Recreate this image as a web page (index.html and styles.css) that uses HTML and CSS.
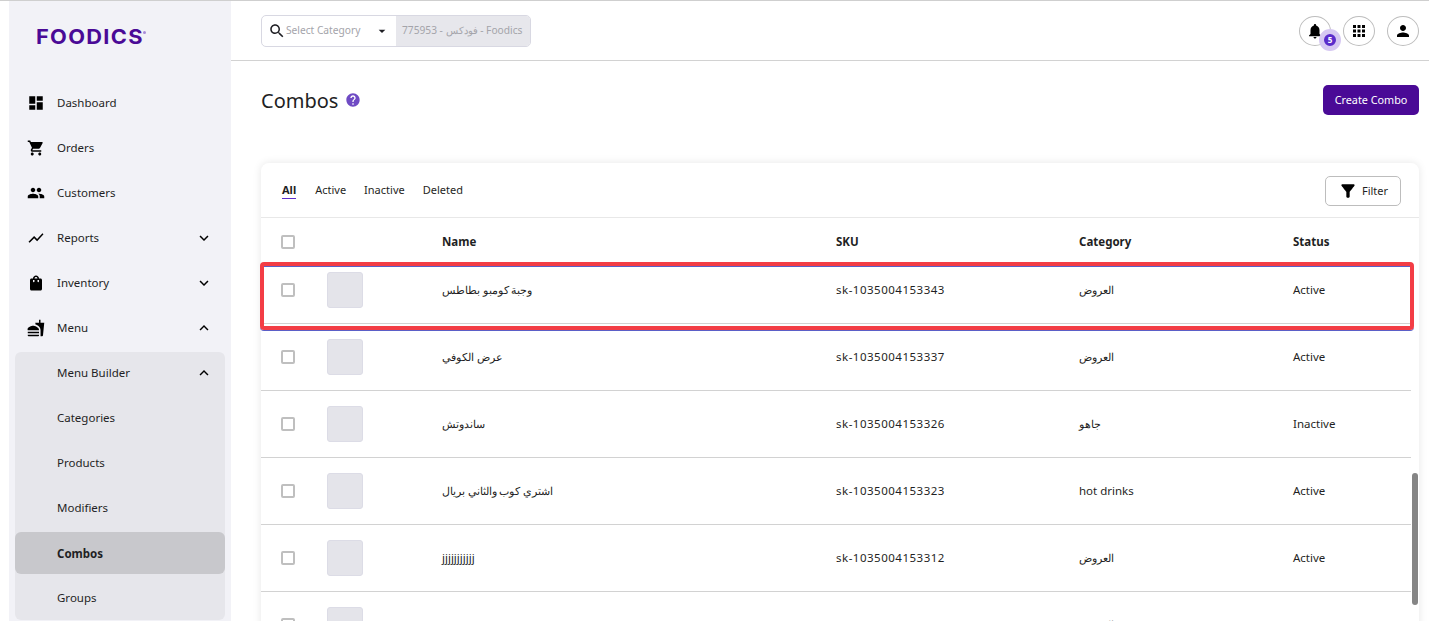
FILE: index.html
```html
<!DOCTYPE html>
<html lang="en">
<head>
    <meta charset="UTF-8">
    <meta name="viewport" content="width=device-width, initial-scale=1.0">
    <title>Combos</title>
    <link rel="stylesheet" href="styles.css">
</head>
<body>
    <aside class="sidebar">
        <div class="logo"><span class="logo-text">FOODICS</span><span class="logo-mark"></span></div>
        <nav class="nav">
            <a href="#" class="nav-item">
                <svg class="nav-icon" viewBox="0 0 24 24"><path d="M3 13h8V3H3v10zm0 8h8v-6H3v6zm10 0h8V11h-8v10zm0-18v6h8V3h-8z"/></svg>
                Dashboard
            </a>
            <a href="#" class="nav-item">
                <svg class="nav-icon" viewBox="0 0 24 24"><path d="M7 18c-1.1 0-1.99.9-1.99 2S5.9 22 7 22s2-.9 2-2-.9-2-2-2zM1 2v2h2l3.6 7.59-1.35 2.45c-.16.28-.25.61-.25.96 0 1.1.9 2 2 2h12v-2H7.42c-.14 0-.25-.11-.25-.25l.03-.12.9-1.63h7.45c.75 0 1.41-.41 1.75-1.03l3.58-6.49c.08-.14.12-.31.12-.48 0-.55-.45-1-1-1H5.21l-.94-2H1zm16 16c-1.1 0-1.99.9-1.99 2s.89 2 1.99 2 2-.9 2-2-.9-2-2-2z"/></svg>
                Orders
            </a>
            <a href="#" class="nav-item">
                <svg class="nav-icon" viewBox="0 0 24 24"><path d="M16 11c1.66 0 2.99-1.34 2.99-3S17.66 5 16 5c-1.66 0-3 1.34-3 3s1.34 3 3 3zm-8 0c1.66 0 2.99-1.34 2.99-3S9.66 5 8 5C6.34 5 5 6.34 5 8s1.34 3 3 3zm0 2c-2.33 0-7 1.17-7 3.5V19h14v-2.5c0-2.33-4.67-3.5-7-3.5zm8 0c-.29 0-.62.02-.97.05 1.16.84 1.97 1.97 1.97 3.45V19h6v-2.5c0-2.33-4.67-3.5-7-3.5z"/></svg>
                Customers
            </a>
            <a href="#" class="nav-item">
                <svg class="nav-icon" viewBox="0 0 24 24"><path d="M3.5 18.49l6-6.01 4 4L22 6.92l-1.41-1.41-7.09 7.97-4-4L2 16.99z"/></svg>
                Reports
                <svg class="chevron" viewBox="0 0 24 24"><path d="M16.59 8.59L12 13.17 7.41 8.59 6 10l6 6 6-6z"/></svg>
            </a>
            <a href="#" class="nav-item">
                <svg class="nav-icon" viewBox="0 0 24 24"><path d="M18 6h-2c0-2.21-1.79-4-4-4S8 3.79 8 6H6c-1.1 0-2 .9-2 2v12c0 1.1.9 2 2 2h12c1.1 0 2-.9 2-2V8c0-1.1-.9-2-2-2zm-8 4c0 .55-.45 1-1 1s-1-.45-1-1V8h2v2zm2-6c1.1 0 2 .9 2 2h-4c0-1.1.9-2 2-2zm4 6c0 .55-.45 1-1 1s-1-.45-1-1V8h2v2z"/></svg>
                Inventory
                <svg class="chevron" viewBox="0 0 24 24"><path d="M16.59 8.59L12 13.17 7.41 8.59 6 10l6 6 6-6z"/></svg>
            </a>
            <a href="#" class="nav-item">
                <svg class="nav-icon" viewBox="0 0 24 24"><path d="M18.06 22.99h1.66c.84 0 1.53-.64 1.63-1.46L23 5.05h-5V1h-1.97v4.05h-4.97l.3 2.34c1.71.47 3.31 1.32 4.27 2.26 1.44 1.42 2.43 2.89 2.43 5.29v8.05zM1 21.99V21h15.03v.99c0 .55-.45 1-1.01 1H2.01c-.56 0-1.01-.45-1.01-1zm15.03-7c.5-4-6.03-5.99-8.03-5.99-2 0-8.53 1.99-7.03 5.99h15.06zM1.02 17h15v2h-15z"/></svg>
                Menu
                <svg class="chevron" viewBox="0 0 24 24"><path d="M12 8l-6 6 1.41 1.41L12 10.83l4.59 4.58L18 14z"/></svg>
            </a>
            <div class="subnav">
                <a href="#" class="nav-item sub-item sub-item-first">
                    Menu Builder
                    <svg class="chevron" viewBox="0 0 24 24"><path d="M12 8l-6 6 1.41 1.41L12 10.83l4.59 4.58L18 14z"/></svg>
                </a>
                <a href="#" class="nav-item sub-item">Categories</a>
                <a href="#" class="nav-item sub-item">Products</a>
                <a href="#" class="nav-item sub-item">Modifiers</a>
                <a href="#" class="nav-item sub-item sub-item-active">Combos</a>
                <a href="#" class="nav-item sub-item">Groups</a>
            </div>
        </nav>
    </aside>

    <div class="main">
        <header class="topbar">
            <div class="search">
                <div class="search-select">
                    <svg class="search-icon" viewBox="0 0 24 24"><path d="M15.5 14h-.79l-.28-.27C15.41 12.59 16 11.11 16 9.5 16 5.91 13.09 3 9.5 3S3 5.91 3 9.5 5.91 16 9.5 16c1.61 0 3.09-.59 4.23-1.57l.27.28v.79l5 4.99L20.49 19l-4.99-5zm-6 0C7.01 14 5 11.99 5 9.5S7.01 5 9.5 5 14 7.01 14 9.5 11.99 14 9.5 14z"/></svg>
                    <span class="search-label">Select Category</span>
                    <svg class="search-caret" viewBox="0 0 24 24"><path d="M7 10l5 5 5-5z"/></svg>
                </div>
                <div class="search-value">775953 - فودكس - Foodics</div>
            </div>
            <div class="topbar-actions">
                <button class="round-btn">
                    <svg viewBox="0 0 24 24"><path d="M12 22c1.1 0 2-.9 2-2h-4c0 1.1.89 2 2 2zm6-6v-5c0-3.07-1.64-5.64-4.5-6.32V4c0-.83-.67-1.5-1.5-1.5s-1.5.67-1.5 1.5v.68C7.63 5.36 6 7.92 6 11v5l-2 2v1h16v-1l-2-2z"/></svg>
                    <span class="badge">5</span>
                </button>
                <button class="round-btn">
                    <svg viewBox="0 0 24 24"><path d="M4 8h4V4H4v4zm6 12h4v-4h-4v4zm-6 0h4v-4H4v4zm0-6h4v-4H4v4zm6 0h4v-4h-4v4zm6-10v4h4V4h-4zm-6 4h4V4h-4v4zm6 6h4v-4h-4v4zm0 6h4v-4h-4v4z"/></svg>
                </button>
                <button class="round-btn">
                    <svg viewBox="0 0 24 24"><path d="M12 12c2.21 0 4-1.79 4-4s-1.79-4-4-4-4 1.79-4 4 1.79 4 4 4zm0 2c-2.67 0-8 1.34-8 4v2h16v-2c0-2.66-5.33-4-8-4z"/></svg>
                </button>
            </div>
        </header>

        <div class="content">
            <div class="page-head">
                <h1 class="page-title">Combos</h1>
                <svg class="help-icon" viewBox="0 0 24 24"><path d="M12 2C6.48 2 2 6.48 2 12s4.48 10 10 10 10-4.48 10-10S17.52 2 12 2zm1 17h-2v-2h2v2zm2.07-7.75l-.9.92C13.45 12.9 13 13.5 13 15h-2v-.5c0-1.1.45-2.1 1.17-2.83l1.24-1.26c.37-.36.59-.86.59-1.41 0-1.1-.9-2-2-2s-2 .9-2 2H8c0-2.21 1.79-4 4-4s4 1.79 4 4c0 .88-.36 1.68-.93 2.25z"/></svg>
                <button class="create-btn">Create Combo</button>
            </div>

            <section class="card">
                <div class="card-head">
                    <div class="tabs">
                        <a href="#" class="tab tab-active">All</a>
                        <a href="#" class="tab">Active</a>
                        <a href="#" class="tab">Inactive</a>
                        <a href="#" class="tab">Deleted</a>
                    </div>
                    <button class="filter-btn">
                        <svg viewBox="0 0 24 24"><path d="M4.25 5.61C6.27 8.2 10 13 10 13v6c0 .55.45 1 1 1h2c.55 0 1-.45 1-1v-6s3.72-4.8 5.74-7.39c.51-.66.04-1.61-.79-1.61H5.04c-.83 0-1.3.95-.79 1.61z"/></svg>
                        Filter
                    </button>
                </div>

                <div class="row row-head">
                    <span class="checkbox"></span>
                    <span></span>
                    <span>Name</span>
                    <span>SKU</span>
                    <span>Category</span>
                    <span>Status</span>
                </div>
                <div class="row row-first">
                    <span class="checkbox"></span>
                    <span class="thumb"></span>
                    <span class="arabic">وجبة كومبو بطاطس</span>
                    <span class="sku">sk-1035004153343</span>
                    <span class="arabic">العروض</span>
                    <span>Active</span>
                </div>
                <div class="row">
                    <span class="checkbox"></span>
                    <span class="thumb"></span>
                    <span class="arabic">عرض الكوفي</span>
                    <span class="sku">sk-1035004153337</span>
                    <span class="arabic">العروض</span>
                    <span>Active</span>
                </div>
                <div class="row">
                    <span class="checkbox"></span>
                    <span class="thumb"></span>
                    <span class="arabic">ساندوتش</span>
                    <span class="sku">sk-1035004153326</span>
                    <span class="arabic">جاهو</span>
                    <span>Inactive</span>
                </div>
                <div class="row">
                    <span class="checkbox"></span>
                    <span class="thumb"></span>
                    <span class="arabic">اشتري كوب والثاني بريال</span>
                    <span class="sku">sk-1035004153323</span>
                    <span>hot drinks</span>
                    <span>Active</span>
                </div>
                <div class="row">
                    <span class="checkbox"></span>
                    <span class="thumb"></span>
                    <span>jjjjjjjjjjj</span>
                    <span class="sku">sk-1035004153312</span>
                    <span class="arabic">العروض</span>
                    <span>Active</span>
                </div>
                <div class="row">
                    <span class="checkbox"></span>
                    <span class="thumb"></span>
                    <span class="arabic">برجر</span>
                    <span class="sku">sk-1035004153301</span>
                    <span class="arabic">العروض</span>
                    <span>Active</span>
                </div>
            </section>
        </div>
    </div>

    <!-- annotation drawn on the screenshot -->
    <div class="highlight"></div>
    <div class="scroll-thumb"></div>
</body>
</html>
```

FILE: styles.css
```css
* {
    box-sizing: border-box;
}

body {
    display: flex;
    height: 621px;
    margin: 0;
    overflow: hidden;
    border-top: 1px solid #cfcfcf;
    background-color: #ffffff;
    color: #1f1f24;
    font-family: "Noto Sans", "Liberation Sans", sans-serif;
    font-size: 11.5px;
}

a {
    color: inherit;
    text-decoration: none;
}

button {
    font-family: inherit;
}

/* sidebar */
.sidebar {
    flex: 0 0 222px;
    margin-left: 9px;
    background-color: #f2f2f7;
}

.logo {
    display: flex;
    height: 79px;
    padding: 24px 0 0 27px;
    color: #4a0a96;
}

.logo-text {
    display: inline-block;
    width: 107px;
    height: 24px;
    font-family: "Inter", sans-serif;
    font-size: 20px;
    font-weight: 700;
    letter-spacing: 1.2px;
    line-height: 24px;
    transform: scaleX(1.09);
    transform-origin: left center;
}

.logo-mark {
    width: 3px;
    height: 3px;
    margin: 6px 0 0 0;
    border-radius: 50%;
    background-color: #a78bd8;
}

.nav-item {
    display: flex;
    align-items: center;
    height: 45px;
    padding: 0 18px 0 48px;
    position: relative;
}

.nav-icon {
    position: absolute;
    left: 18px;
    width: 18px;
    height: 18px;
}

.chevron {
    width: 18px;
    height: 18px;
    margin-left: auto;
}

.subnav {
    display: flow-root;
    margin: 2px 6px 0;
    border-radius: 6px;
    background-color: #e6e6eb;
}

.sub-item {
    padding: 0 12px 0 42px;
}

.sub-item-first {
    margin-top: -2px;
}

.sub-item-active {
    height: 42px;
    margin-top: 2px;
    margin-bottom: 1px;
    border-radius: 6px;
    background-color: #c8c8cc;
    font-weight: 700;
}

/* top bar */
.main {
    flex: 1;
    min-width: 0;
}

.topbar {
    display: flex;
    justify-content: space-between;
    align-items: center;
    height: 60px;
    padding: 0 10px 0 30px;
    border-bottom: 1px solid #d2d2d2;
}

.search {
    display: flex;
    width: 270px;
    height: 32px;
    border: 1px solid #d8d8e2;
    border-radius: 5px;
    overflow: hidden;
    font-size: 10.2px;
}

.search-select {
    display: flex;
    align-items: center;
    width: 134px;
    padding-left: 6px;
    color: #a4a4aa;
}

.search-icon {
    width: 18px;
    height: 18px;
    fill: #1f1f24;
}

.search-label {
    margin-bottom: 2px;
}

.search-caret {
    width: 16px;
    height: 16px;
    margin-left: auto;
    margin-right: 6px;
    fill: #1f1f24;
}

.search-value {
    flex: 1;
    padding: 0 6px;
    background-color: #e7e7ec;
    color: #a4a4aa;
    line-height: 28px;
    white-space: nowrap;
    overflow: hidden;
}

.topbar-actions {
    display: flex;
    gap: 12px;
}

.round-btn {
    display: flex;
    justify-content: center;
    align-items: center;
    position: relative;
    width: 32px;
    height: 30px;
    padding: 0;
    border: 1px solid #bdbdbd;
    border-radius: 50%;
    background-color: #ffffff;
}

.round-btn svg {
    width: 18px;
    height: 18px;
}

.badge {
    position: absolute;
    top: 12px;
    left: 19px;
    width: 22px;
    height: 22px;
    border: 5px solid #d6c8f2;
    border-radius: 50%;
    background-color: #5a2ccb;
    color: #ffffff;
    font-size: 8px;
    font-weight: 700;
    line-height: 12px;
    text-align: center;
}

/* page */
.content {
    padding: 0 10px 0 30px;
}

.page-head {
    display: flex;
    align-items: flex-start;
    height: 102px;
    padding-top: 24px;
}

.page-title {
    margin: 1px 0 0;
    font-size: 20px;
    font-weight: 400;
    line-height: 30px;
}

.help-icon {
    width: 16px;
    height: 16px;
    margin: 7px 0 0 7px;
    fill: #6f4bc4;
}

.create-btn {
    margin-left: auto;
    width: 96px;
    height: 30px;
    padding: 0 0 2px;
    border: none;
    border-radius: 5px;
    background-color: #4a0a96;
    color: #ffffff;
    font-size: 10.8px;
}

.card {
    border-radius: 8px 8px 0 0;
    box-shadow: 0 0 8px rgba(0, 0, 0, 0.1);
    background-color: #ffffff;
}

.card-head {
    display: flex;
    justify-content: space-between;
    align-items: center;
    height: 55px;
    padding: 0 18px 0 21px;
    border-bottom: 1px solid #e8e8e8;
}

.tabs {
    display: flex;
    gap: 18px;
    margin-top: 1px;
}

.tab {
    padding-bottom: 1px;
    border-bottom: 1px solid transparent;
    font-size: 11px;
}

.tab-active {
    margin-right: 1px;
    border-bottom-color: #5a2ccb;
    font-weight: 700;
}

.filter-btn {
    display: flex;
    align-items: center;
    justify-content: center;
    gap: 4px;
    width: 76px;
    height: 30px;
    margin-top: 1px;
    border: 1px solid #bdbdbd;
    border-radius: 5px;
    background-color: #ffffff;
    color: #1f1f24;
    font-size: 11px;
}

.filter-btn svg {
    width: 20px;
    height: 20px;
}

/* table rows */
.row {
    display: grid;
    grid-template-columns: 46px 115px 394px 243px 214px 1fr;
    align-items: center;
    height: 67px;
    margin-right: 8px;
    padding-left: 20px;
    border-bottom: 1px solid #d2d2d2;
}

.row span:nth-child(n+3) {
    margin-bottom: 2px;
}

.row-head {
    height: 48px;
    border-bottom: none;
    font-weight: 700;
}

.row-first {
    height: 58px;
    padding-bottom: 9px;
}

.sku {
    letter-spacing: 0.5px;
}

.row .arabic {
    margin: 2px 0 0;
    font-size: 10.5px;
}

.checkbox {
    width: 14px;
    height: 14px;
    border: 2px solid #bfbfbf;
    border-radius: 2px;
}

.thumb {
    width: 36px;
    height: 36px;
    border: 1px solid #dcdce6;
    border-radius: 3px;
    background-color: #e4e4ea;
}

/* overlays */
.highlight {
    position: absolute;
    left: 260px;
    top: 262px;
    width: 1154px;
    height: 68px;
    border: 4px solid #f33d45;
    border-radius: 4px;
    box-shadow: inset 0 1px 0 #5b5fc7, 0 1px 0 #5b5fc7;
}

.scroll-thumb {
    position: absolute;
    left: 1412px;
    top: 473px;
    width: 6px;
    height: 132px;
    border-radius: 3px;
    background-color: #858585;
}
```
